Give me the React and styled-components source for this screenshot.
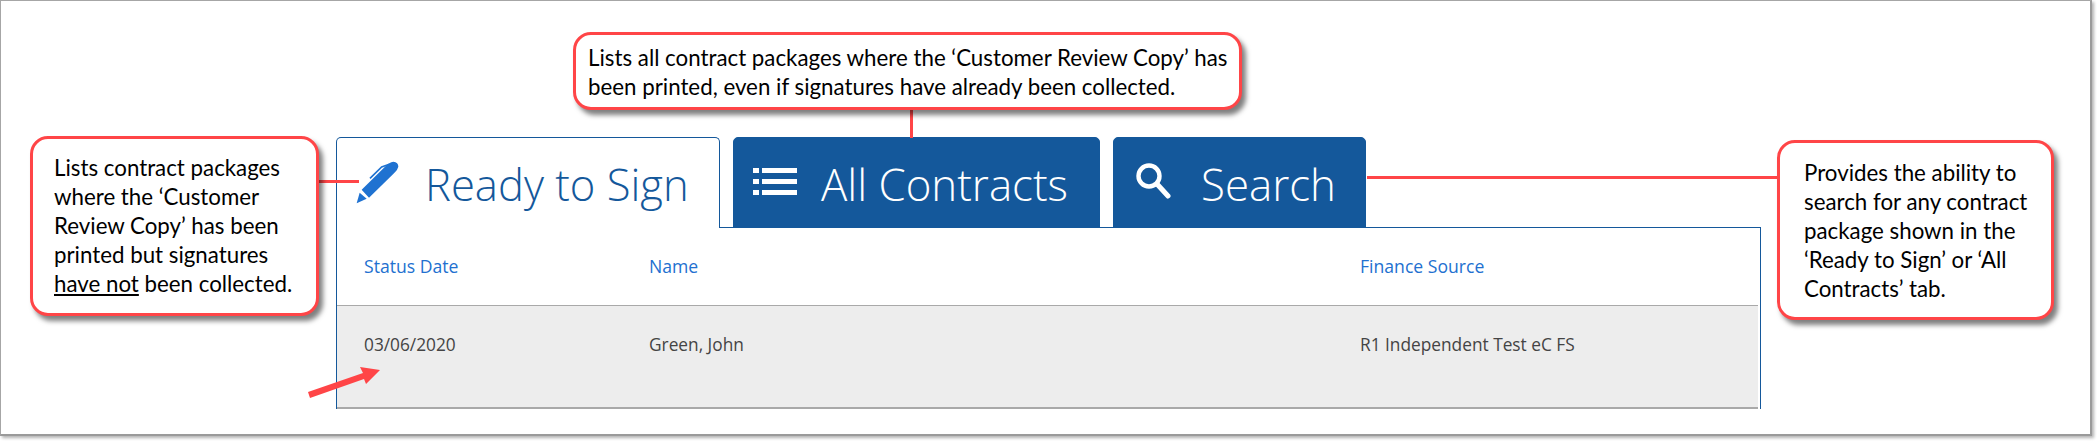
import React from "react";
import styled, { createGlobalStyle } from "styled-components";

const Global = createGlobalStyle`
  html, body { margin: 0; padding: 0; background: #fff; }
  body { width: 2097px; height: 441px; overflow: hidden; font-family: "Open Sans", "Liberation Sans", sans-serif; }
`;

const Frame = styled.div`
  position: relative;
  box-sizing: border-box;
  width: 2092px;
  height: 436px;
  background: #fff;
  border: 1px solid #a6a6a6;
  border-right: 2px solid #9a9a9a;
  border-bottom: 2px solid #9a9a9a;
  box-shadow: 2px 2px 3px rgba(0, 0, 0, 0.3);
  padding: 136px 0 0 335px;
`;

const Widget = styled.div`
  width: 1425px;
`;

const TabList = styled.div`
  display: flex;
  gap: 13px;
  height: 91px;
  position: relative;
  z-index: 1;
`;

const Tab = styled.div`
  box-sizing: border-box;
  width: ${(p) => p.$width}px;
  height: 91px;
  display: flex;
  align-items: flex-start;
  padding-top: 17px;
  padding-left: ${(p) => p.$pad}px;
  gap: ${(p) => p.$gap}px;
  border-radius: 5px 5px 0 0;
  font-weight: 300;
  font-size: ${(p) => p.$size}px;
  line-height: 58px;
  white-space: nowrap;
  background: ${(p) => (p.$active ? "#fff" : "#14589b")};
  color: ${(p) => (p.$active ? "#14589b" : "#fff")};
  border: 1px solid #14589b;
  border-bottom: ${(p) => (p.$active ? "none" : "1px solid #14589b")};
`;

const TabIcon = styled.svg`
  flex: none;
  display: block;
  margin-top: ${(p) => p.$top}px;
`;

const Panel = styled.div`
  box-sizing: border-box;
  height: 182px;
  margin-top: -1px;
  border: 1px solid #14589b;
  border-bottom: none;
  padding-right: 2px;
`;

const Grid = styled.div`
  display: grid;
  grid-template-columns: 285px 711px 1fr;
  padding-left: 27px;
  box-sizing: border-box;
  line-height: 22px;
`;

const HeadRow = styled(Grid)`
  height: 77px;
  align-items: center;
  padding-bottom: 2px;
  font-size: 17.6px;
  font-weight: 500;
  color: #2270d0;
`;

const DataRow = styled(Grid)`
  height: 104px;
  padding-top: 28px;
  font-size: 17.3px;
  background: #ededed;
  border-top: 1px solid #a9a9a9;
  border-bottom: 2px solid #a9a9a9;
  color: #444;
`;

const Callout = styled.div`
  position: absolute;
  left: ${(p) => p.$x}px;
  top: ${(p) => p.$y}px;
  width: ${(p) => p.$w}px;
  height: ${(p) => p.$h}px;
  box-sizing: border-box;
  padding: ${(p) => p.$pt}px 0 0 ${(p) => p.$pl}px;
  background: #fff;
  border: 3px solid #ff4547;
  border-radius: 18px;
  box-shadow: 4px 5px 5px rgba(0, 0, 0, 0.5);
  font-family: Lato, "Liberation Sans", sans-serif;
  font-size: 22.3px;
  line-height: 29px;
  color: #000;
  white-space: nowrap;
  z-index: 3;
`;

const Connector = styled.div`
  position: absolute;
  left: ${(p) => p.$x}px;
  top: ${(p) => p.$y}px;
  width: ${(p) => p.$w}px;
  height: ${(p) => p.$h}px;
  background: #ff4547;
  z-index: 2;
`;

const Arrow = styled.svg`
  position: absolute;
  left: 300px;
  top: 360px;
  z-index: 3;
`;

const Underlined = styled.span`
  text-decoration: underline;
`;

export default function App() {
  return (
    <>
      <Global />
      <Frame>
        <Widget>
          <TabList>
            <Tab $active $width={384} $pad={13} $gap={20} $size={43.6}>
              <TabIcon $top={0} width="55" height="55" viewBox="0 0 165 165" fill="#1f72d1">
                <path d="M20 145 L29 113 L50 131 Z" />
                <path d="M35 104 L105 35 Q118 22 130 20 Q145 22 145 35 Q143 45 132 55 L57 128 Z" />
                <path d="M60 70 L95 36 L118 28" fill="none" stroke="#1f72d1" strokeWidth="5" />
              </TabIcon>
              Ready to Sign
            </Tab>
            <Tab $width={367} $pad={19} $gap={24} $size={43.8}>
              <TabIcon $top={13} width="44" height="28" viewBox="0 0 44 28" fill="#fff">
                <rect x="0" y="0" width="6" height="5" />
                <rect x="9" y="0" width="35" height="5" />
                <rect x="0" y="11" width="6" height="5" />
                <rect x="9" y="11" width="35" height="5" />
                <rect x="0" y="22" width="6" height="5" />
                <rect x="9" y="22" width="35" height="5" />
              </TabIcon>
              All Contracts
            </Tab>
            <Tab $width={253} $pad={21} $gap={30} $size={43.8}>
              <TabIcon $top={7} width="36" height="40" viewBox="0 0 36 40" fill="none" stroke="#fff">
                <circle cx="14" cy="14" r="10.5" strokeWidth="4.4" />
                <path d="M22 22 L33 34" strokeWidth="5" strokeLinecap="round" />
              </TabIcon>
              Search
            </Tab>
          </TabList>
          <Panel>
            <HeadRow>
              <div>Status Date</div>
              <div>Name</div>
              <div>Finance Source</div>
            </HeadRow>
            <DataRow>
              <div>03/06/2020</div>
              <div>Green, John</div>
              <div>R1 Independent Test eC FS</div>
            </DataRow>
          </Panel>
        </Widget>

        <Connector $x={316} $y={179} $w={42} $h={3} />
        <Connector $x={909} $y={108} $w={3} $h={29} />
        <Connector $x={1366} $y={175} $w={412} $h={3} />

        <Callout $x={29} $y={135} $w={289} $h={180} $pt={14} $pl={21}>
          Lists contract packages<br />
          where the ‘Customer<br />
          Review Copy’ has been<br />
          printed but signatures<br />
          <Underlined>have not</Underlined> been collected.
        </Callout>
        <Callout $x={572} $y={31} $w={669} $h={78} $pt={8} $pl={12}>
          Lists all contract packages where the ‘Customer Review Copy’ has<br />
          been printed, even if signatures have already been collected.
        </Callout>
        <Callout $x={1776} $y={139} $w={277} $h={180} $pt={15} $pl={24}>
          Provides the ability to<br />
          search for any contract<br />
          package shown in the<br />
          ‘Ready to Sign’ or ‘All<br />
          Contracts’ tab.
        </Callout>

        <Arrow width="90" height="40" viewBox="0 0 90 40" fill="#ff4547">
          <path d="M7 31 L62 12 L59 6 L79 9 L65 23 L63 18 L9 37 Z" />
        </Arrow>
      </Frame>
    </>
  );
}
